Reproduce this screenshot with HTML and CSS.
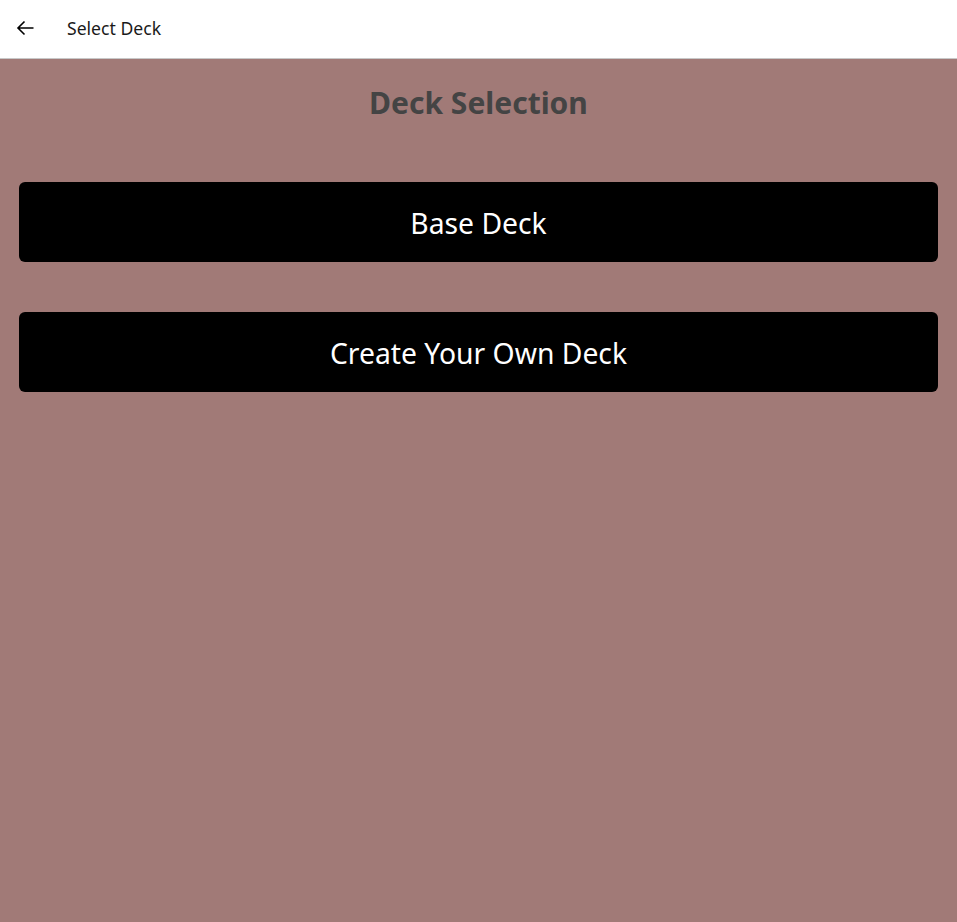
FILE: index.html
```html
<!DOCTYPE html>
<html>
<head>
<meta charset="utf-8">
<link rel="stylesheet" href="styles.css">
</head>
<body>
<header class="appbar">
  <button class="back" aria-label="Back">
    <svg width="20" height="20" viewBox="0 0 20 20"><path d="M18.5 10H3M9.5 3.5L3 10l6.5 6.5" fill="none" stroke="#000" stroke-width="1.6"/></svg>
  </button>
  <span class="appbar-title">Select Deck</span>
</header>
<main class="content">
  <h1 class="title">Deck Selection</h1>
  <div class="options">
    <button class="deck-btn">Base Deck</button>
    <button class="deck-btn">Create Your Own Deck</button>
  </div>
</main>
</body>
</html>
```
FILE: styles.css
```css
html, body {
  margin: 0;
  height: 100%;
}
body {
  background: #a17a77;
  font-family: "Noto Sans", "Open Sans", sans-serif;
  display: flex;
  flex-direction: column;
}
.appbar {
  height: 58px;
  background: #fff;
  border-bottom: 1px solid #c8c8c8;
  display: flex;
  align-items: center;
  box-sizing: content-box;
}
.back {
  width: 50px;
  height: 58px;
  background: none;
  border: 0;
  padding: 0 0 2px 15px;
  display: flex;
  align-items: center;
}
.appbar-title {
  margin-left: 17px;
  font-size: 17.6px;
  color: #1a1a1a;
  padding-bottom: 3px;
}
.content {
  padding: 0 19px;
}
.title {
  margin: 22px 0 0;
  text-align: center;
  font-size: 30px;
  font-weight: 700;
  color: #444444;
  line-height: 44px;
}
.options {
  margin-top: 57px;
  display: flex;
  flex-direction: column;
  gap: 50px;
}
.deck-btn {
  height: 80px;
  background: #000;
  color: #fff;
  border: 0;
  border-radius: 6px;
  font-family: inherit;
  font-size: 28.3px;
  padding: 2px 0 0;
}
```
